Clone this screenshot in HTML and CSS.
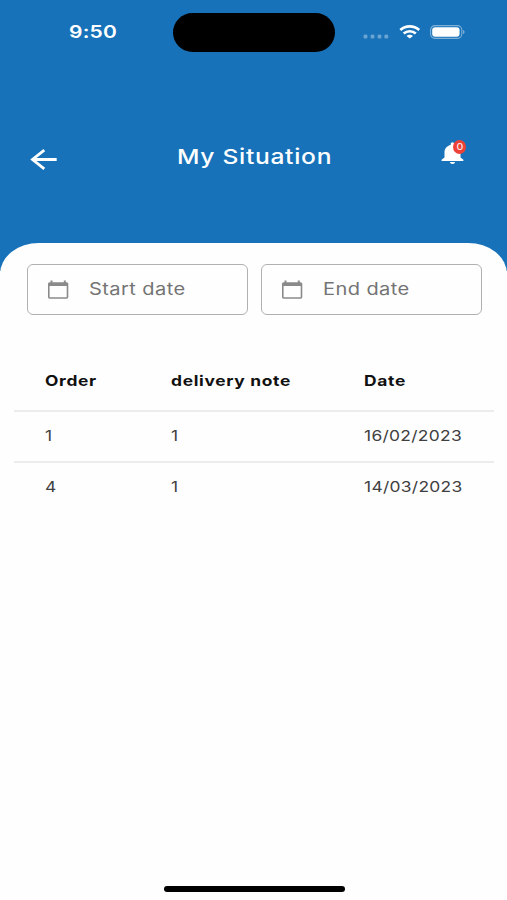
FILE: index.html
```html
<!DOCTYPE html>
<html lang="en">
<head>
<meta charset="utf-8">
<title>My Situation</title>
<link rel="stylesheet" href="styles.css">
</head>
<body>
<div class="screen">
  <header class="header">
    <div class="status">
      <div class="status-time"><span class="wide">9:50</span></div>
      <div class="island"></div>
      <div class="status-icons">
        <svg class="dots" width="26" height="5" viewBox="0 0 26 5" fill="#fff" fill-opacity=".35"><rect x=".5" y=".5" width="4" height="4" rx="1.5"/><rect x="7.5" y=".5" width="4" height="4" rx="1.5"/><rect x="14.5" y=".5" width="4" height="4" rx="1.5"/><rect x="21.3" y=".5" width="4" height="4" rx="1.5"/></svg>
        <svg class="wifi" width="22" height="14" viewBox="0 0 22 14" fill="none" stroke="#fff" stroke-width="2.7"><path d="M1.300 5C6.800 .2 14.700 .2 20.200 5"/><path d="M4.700 8.500C8.100 5.500 13.400 5.500 16.800 8.500"/><path d="M10.750 13.600L7.500 11C9.300 9.200 12.200 9.200 14 11Z" fill="#fff" stroke="none"/></svg>
        <svg class="battery" width="36" height="14" viewBox="0 0 36 14"><rect x=".6" y=".6" width="31.200" height="12.800" rx="4.300" fill="none" stroke="#fff" stroke-opacity=".45" stroke-width="1.100"/><rect x="2.200" y="2.200" width="27.400" height="9.600" rx="3" fill="#fff"/><path d="M33.200 4.800C35 5.500 35 8.500 33.200 9.200Z" fill="#fff" fill-opacity=".5"/></svg>
      </div>
    </div>
    <nav class="bar">
      <svg class="back" width="28" height="22" viewBox="0 0 28 22" fill="none" stroke="#fff" stroke-width="2.800"><path d="M26.700 10.500H3M14.300 1.200L2.500 10.500L14.300 19.800"/></svg>
      <h1 class="title"><span class="wide">My Situation</span></h1>
      <div class="bell">
        <svg width="23" height="22" viewBox="0 0 23 22" fill="#fff"><path d="M11.500 22C12.900 22 14 21.200 14 20H9C9 21.200 10.100 22 11.500 22ZM19.500 15.500V10.200C19.500 6.500 17 3.600 13.300 2.900V2C13.300 1 12.500 .3 11.500 .3S9.700 1 9.700 2V2.900C6 3.600 3.500 6.500 3.500 10.200V15.500L.6 17.800V19H22.400V17.800Z"/></svg>
        <span class="badge"><span class="count">0</span></span>
      </div>
    </nav>
  </header>
  <main class="sheet">
    <div class="filters">
      <div class="field">
        <svg width="22" height="20" viewBox="0 0 22 20"><path fill="#8a8a8a" fill-rule="evenodd" d="M3.500 .5H5.500V2.200H16.800V.5H18.800V2.200H19.500C20.700 2.200 21.300 3 21.300 4V17C21.300 18 20.700 18.700 19.500 18.700H2.800C1.600 18.700 1 18 1 17V4C1 3 1.600 2.200 2.800 2.200H3.500ZM2.600 6.100V17.200H19.700V6.100Z"/></svg>
        <span class="label"><span class="wide">Start date</span></span>
      </div>
      <div class="field">
        <svg width="22" height="20" viewBox="0 0 22 20"><path fill="#8a8a8a" fill-rule="evenodd" d="M3.500 .5H5.500V2.200H16.800V.5H18.800V2.200H19.500C20.700 2.200 21.300 3 21.300 4V17C21.300 18 20.700 18.700 19.500 18.700H2.800C1.600 18.700 1 18 1 17V4C1 3 1.600 2.200 2.800 2.200H3.500ZM2.600 6.100V17.200H19.700V6.100Z"/></svg>
        <span class="label"><span class="wide">End date</span></span>
      </div>
    </div>
    <div class="table">
      <div class="row head"><div><span class="wide">Order</span></div><div><span class="wide">delivery note</span></div><div><span class="wide">Date</span></div></div>
      <div class="row"><div><span class="wide">1</span></div><div><span class="wide">1</span></div><div><span class="wide">16/02/2023</span></div></div>
      <div class="row"><div><span class="wide">4</span></div><div><span class="wide">1</span></div><div><span class="wide">14/03/2023</span></div></div>
    </div>
    <div class="home"></div>
  </main>
</div>
</body>
</html>
```
FILE: styles.css
```css
* { box-sizing: border-box; }
body { margin: 0; background: #fefefe; font-family: Inter, "Liberation Sans", sans-serif; }
.screen { width: 507px; height: 900px; overflow: hidden; display: flex; flex-direction: column; }
/* Extended letterforms */
.wide { display: inline-block; transform: scaleX(1.2); transform-origin: 0 50%; white-space: nowrap; }
.header { height: 271px; flex: none; background: #1772b9; color: #fff; }
.status { height: 64px; display: grid; grid-template-columns: 173px 162px 1fr; align-items: center; }
.status-time { padding-left: 69px; font-size: 17.500px; line-height: 24px; font-weight: 600; letter-spacing: .2px; }
.island { height: 39px; border-radius: 20px; background: #000; }
.status-icons { display: flex; padding-left: 28px; }
.dots { margin-top: 9px; }
.wifi { margin-left: 10px; }
.battery { margin-left: 9px; }
.bar { height: 60px; margin-top: 66px; display: grid; grid-template-columns: 177px 264px 1fr; }
.back { margin: 19px 0 0 30px; }
.title { margin: 13px 0 0; font-size: 20.500px; line-height: 28px; font-weight: 500; letter-spacing: .58px; }
.bell { position: relative; width: 23px; height: 22px; margin-top: 12px; }
.bell svg { display: block; }
.badge { position: absolute; left: 12px; top: -2px; width: 13px; height: 14px; border-radius: 50%; background: #ee4238; font-size: 9px; line-height: 14px; text-align: center; }
.count { display: inline-block; transform: scaleX(1.2); }
.sheet { flex: 1; margin-top: -28px; padding-top: 21px; background: #fefefe; border-radius: 39px 39px 0 0 / 31px 31px 0 0; display: flex; flex-direction: column; }
.filters { display: grid; grid-template-columns: 221px 221px; column-gap: 13px; margin-left: 26.500px; }
.field { height: 51px; border: 1.500px solid #b0b0b0; border-radius: 6px; display: flex; align-items: center; padding-left: 19px; }
.label { margin: -1px 0 0 20.500px; font-size: 16.700px; line-height: 24px; color: #747474; letter-spacing: .35px; }
.table { margin: 36px 13px 0 14px; }
.row { height: 51px; display: grid; grid-template-columns: 126px 193px 1fr; padding: 0 0 2px 31px; align-items: center; border-top: 2px solid #ececec; font-size: 14.500px; line-height: 20px; color: #404040; letter-spacing: .25px; }
.row.head { height: 59px; padding-bottom: 0; border-top: 0; font-weight: 700; color: #111; letter-spacing: .56px; }
.home { width: 181px; height: 6px; margin: auto auto 8px 164px; border-radius: 3px; background: #000; }
```
